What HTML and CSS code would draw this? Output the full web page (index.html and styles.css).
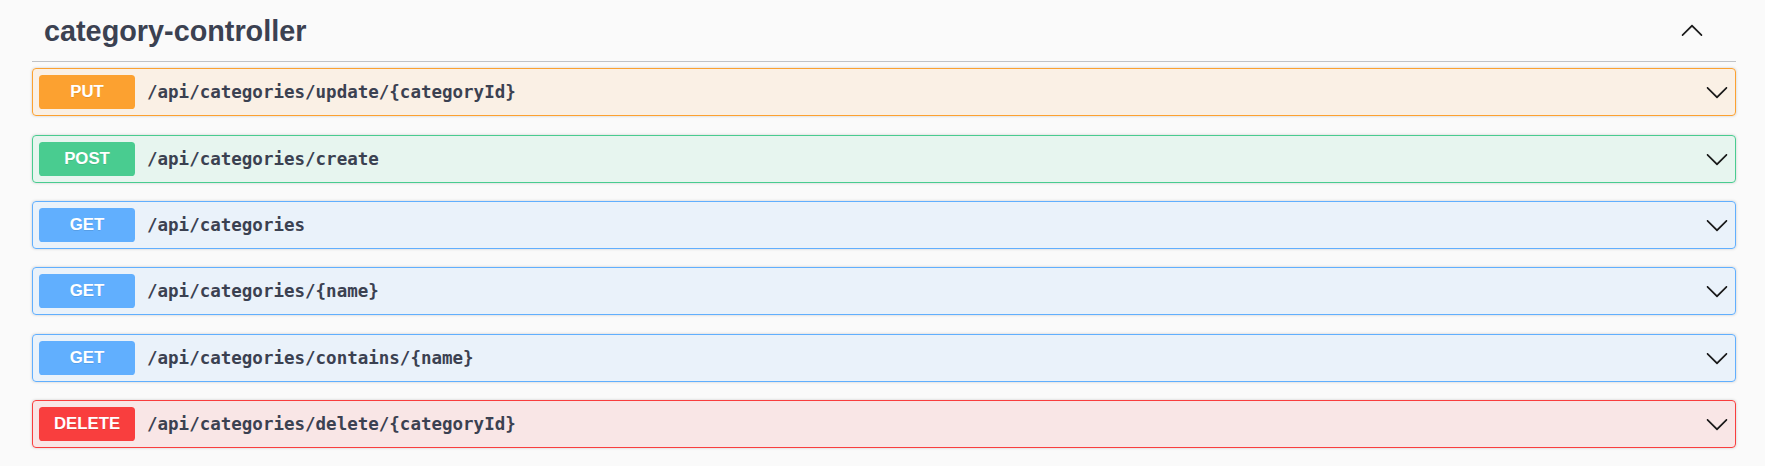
FILE: index.html
```html
<!DOCTYPE html>
<html>
<head>
<meta charset="utf-8">
<link rel="stylesheet" href="styles.css">
</head>
<body>
<div class="wrapper">
  <div class="tag">
    <h3 class="tag-title">category-controller</h3>
    <svg class="arrow arrow-up" viewBox="0 0 20 20" width="24" height="24"><path d="M17.418 6.109c.272-.268.709-.268.979 0s.271.701 0 .969l-7.908 7.83c-.27.268-.707.268-.979 0l-7.908-7.83c-.27-.268-.27-.701 0-.969.271-.268.709-.268.979 0L10 13.25l7.418-7.141z"/></svg>
  </div>
  <div class="op op-put">
    <span class="method">PUT</span>
    <span class="path">/api/categories/update/{categoryId}</span>
    <svg class="arrow" viewBox="0 0 20 20" width="24" height="24"><path d="M17.418 6.109c.272-.268.709-.268.979 0s.271.701 0 .969l-7.908 7.83c-.27.268-.707.268-.979 0l-7.908-7.83c-.27-.268-.27-.701 0-.969.271-.268.709-.268.979 0L10 13.25l7.418-7.141z"/></svg>
  </div>
  <div class="op op-post">
    <span class="method">POST</span>
    <span class="path">/api/categories/create</span>
    <svg class="arrow" viewBox="0 0 20 20" width="24" height="24"><path d="M17.418 6.109c.272-.268.709-.268.979 0s.271.701 0 .969l-7.908 7.83c-.27.268-.707.268-.979 0l-7.908-7.83c-.27-.268-.27-.701 0-.969.271-.268.709-.268.979 0L10 13.25l7.418-7.141z"/></svg>
  </div>
  <div class="op op-get">
    <span class="method">GET</span>
    <span class="path">/api/categories</span>
    <svg class="arrow" viewBox="0 0 20 20" width="24" height="24"><path d="M17.418 6.109c.272-.268.709-.268.979 0s.271.701 0 .969l-7.908 7.83c-.27.268-.707.268-.979 0l-7.908-7.83c-.27-.268-.27-.701 0-.969.271-.268.709-.268.979 0L10 13.25l7.418-7.141z"/></svg>
  </div>
  <div class="op op-get">
    <span class="method">GET</span>
    <span class="path">/api/categories/{name}</span>
    <svg class="arrow" viewBox="0 0 20 20" width="24" height="24"><path d="M17.418 6.109c.272-.268.709-.268.979 0s.271.701 0 .969l-7.908 7.83c-.27.268-.707.268-.979 0l-7.908-7.83c-.27-.268-.27-.701 0-.969.271-.268.709-.268.979 0L10 13.25l7.418-7.141z"/></svg>
  </div>
  <div class="op op-get">
    <span class="method">GET</span>
    <span class="path">/api/categories/contains/{name}</span>
    <svg class="arrow" viewBox="0 0 20 20" width="24" height="24"><path d="M17.418 6.109c.272-.268.709-.268.979 0s.271.701 0 .969l-7.908 7.83c-.27.268-.707.268-.979 0l-7.908-7.83c-.27-.268-.27-.701 0-.969.271-.268.709-.268.979 0L10 13.25l7.418-7.141z"/></svg>
  </div>
  <div class="op op-delete">
    <span class="method">DELETE</span>
    <span class="path">/api/categories/delete/{categoryId}</span>
    <svg class="arrow" viewBox="0 0 20 20" width="24" height="24"><path d="M17.418 6.109c.272-.268.709-.268.979 0s.271.701 0 .969l-7.908 7.83c-.27.268-.707.268-.979 0l-7.908-7.83c-.27-.268-.27-.701 0-.969.271-.268.709-.268.979 0L10 13.25l7.418-7.141z"/></svg>
  </div>
</div>
</body>
</html>
```

FILE: styles.css
```css
html, body {
  margin: 0;
  padding: 0;
  background: #fafafa;
}

.wrapper {
  padding: 0 29.5px 0 32px;
}

.tag {
  display: flex;
  align-items: center;
  height: 61px;
  padding: 0 31.5px 0 12px;
  border-bottom: 1px solid rgba(59, 65, 81, 0.3);
  margin-bottom: 6.4px;
}

.tag-title {
  flex: 1;
  margin: 0;
  font-family: "Liberation Sans", Arial, sans-serif;
  font-size: 28.8px;
  font-weight: 700;
  line-height: 34px;
  color: #3b4151;
}

.arrow {
  display: block;
  flex: none;
  fill: #1a1a1a;
}

.arrow-up {
  transform: rotate(180deg);
}

.op {
  display: flex;
  align-items: center;
  padding: 6px;
  border: 1px solid;
  border-radius: 4px;
  box-shadow: 0 0 3px rgba(0, 0, 0, 0.19);
  margin-bottom: 18.3px;
}

.method {
  flex: none;
  width: 96px;
  height: 34px;
  line-height: 34px;
  text-align: center;
  border-radius: 3.6px;
  color: #fff;
  font-family: "Liberation Sans", Arial, sans-serif;
  font-size: 16.8px;
  font-weight: 700;
  text-shadow: 0 1px 0 rgba(0, 0, 0, 0.1);
}

.path {
  flex: 1;
  padding: 0 12px;
  font-family: "DejaVu Sans Mono", "Liberation Mono", monospace;
  font-size: 17.5px;
  font-weight: 700;
  color: #3b4151;
}

.op-put {
  border-color: #fca130;
  background: rgba(252, 161, 48, 0.1);
}
.op-put .method { background: #fca130; }

.op-post {
  border-color: #49cc90;
  background: rgba(73, 204, 144, 0.1);
}
.op-post .method { background: #49cc90; }

.op-get {
  border-color: #61affe;
  background: rgba(97, 175, 254, 0.1);
}
.op-get .method { background: #61affe; }

.op-delete {
  border-color: #f93e3e;
  background: rgba(249, 62, 62, 0.1);
}
.op-delete .method { background: #f93e3e; }
```
